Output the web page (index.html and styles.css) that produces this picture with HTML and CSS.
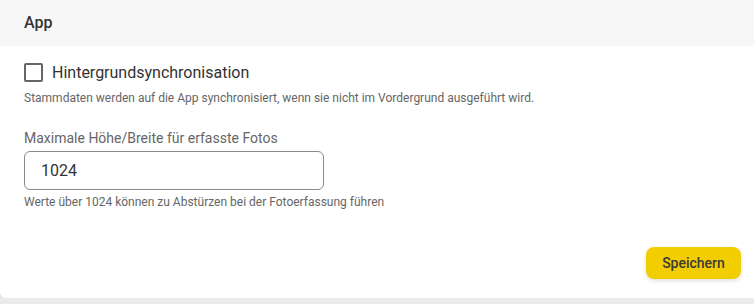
FILE: index.html
```html
<!DOCTYPE html>
<html lang="de">
<head>
    <meta charset="UTF-8">
    <meta name="viewport" content="width=device-width, initial-scale=1.0">
    <title>Einstellungen - App</title>
    <link rel="stylesheet" href="styles.css">
</head>
<body>

    <div class="card">
        <div class="card-header">App</div>

        <div class="card-body">
            <label class="checkbox-row">
                <span class="checkbox"></span>
                <span class="checkbox-label">Hintergrundsynchronisation</span>
            </label>
            <div class="hint hint-first">Stammdaten werden auf die App synchronisiert, wenn sie nicht im Vordergrund ausgeführt wird.</div>

            <label class="field-label" for="maxSize">Maximale Höhe/Breite für erfasste Fotos</label>
            <input type="text" id="maxSize" class="field-input" value="1024">
            <div class="hint">Werte über 1024 können zu Abstürzen bei der Fotoerfassung führen</div>

            <div class="actions">
                <button type="button" class="btn-save">Speichern</button>
            </div>
        </div>
    </div>

</body>
</html>
```

FILE: styles.css
```css
html, body {
    overflow: hidden;
}

body {
    font-family: Roboto, "Liberation Sans", Arial, sans-serif;
    background-color: #ebebeb;
    color: #333;
    margin: 0;
    padding: 0;
}

.card {
    background-color: #ffffff;
    border-radius: 0 0 6px 6px;
    box-shadow: 0 1px 4px rgba(0, 0, 0, 0.08);
    margin-right: -11px;
    overflow: hidden;
}

.card-header {
    background-color: #f7f7f7;
    height: 46px;
    line-height: 45px;
    padding: 0 24px;
    font-size: 16px;
    font-weight: 500;
    color: #333;
}

.card-body {
    display: flex;
    flex-direction: column;
    padding: 16px 24px 19px;
}

.checkbox-row {
    display: flex;
    align-items: center;
    gap: 9px;
    height: 20px;
    cursor: pointer;
}

.checkbox {
    box-sizing: border-box;
    width: 19px;
    height: 19px;
    border: 2px solid #666;
    border-radius: 2px;
}

.checkbox-label {
    font-size: 16px;
    color: #333;
}

.hint {
    font-size: 12px;
    line-height: 16px;
    color: #666;
    margin-top: 4px;
}

.hint-first {
    margin-top: 8px;
}

.field-label {
    font-size: 14px;
    line-height: 20px;
    color: #666;
    margin-top: 22px;
}

.field-input {
    box-sizing: border-box;
    width: 300px;
    height: 39px;
    margin-top: 3px;
    padding: 0 16px;
    border: 1px solid #8a8a8a;
    border-radius: 6px;
    font-family: inherit;
    font-size: 16px;
    color: #333;
    outline: none;
}

.actions {
    display: flex;
    justify-content: flex-end;
    margin-top: 37px;
}

.btn-save {
    background-color: #f2cd00;
    color: #3a3a3a;
    width: 95px;
    height: 32px;
    border: none;
    border-radius: 8px;
    font-family: inherit;
    font-size: 14px;
    font-weight: 500;
    cursor: pointer;
    box-shadow: 0 2px 4px rgba(0, 0, 0, 0.12);
}
```
